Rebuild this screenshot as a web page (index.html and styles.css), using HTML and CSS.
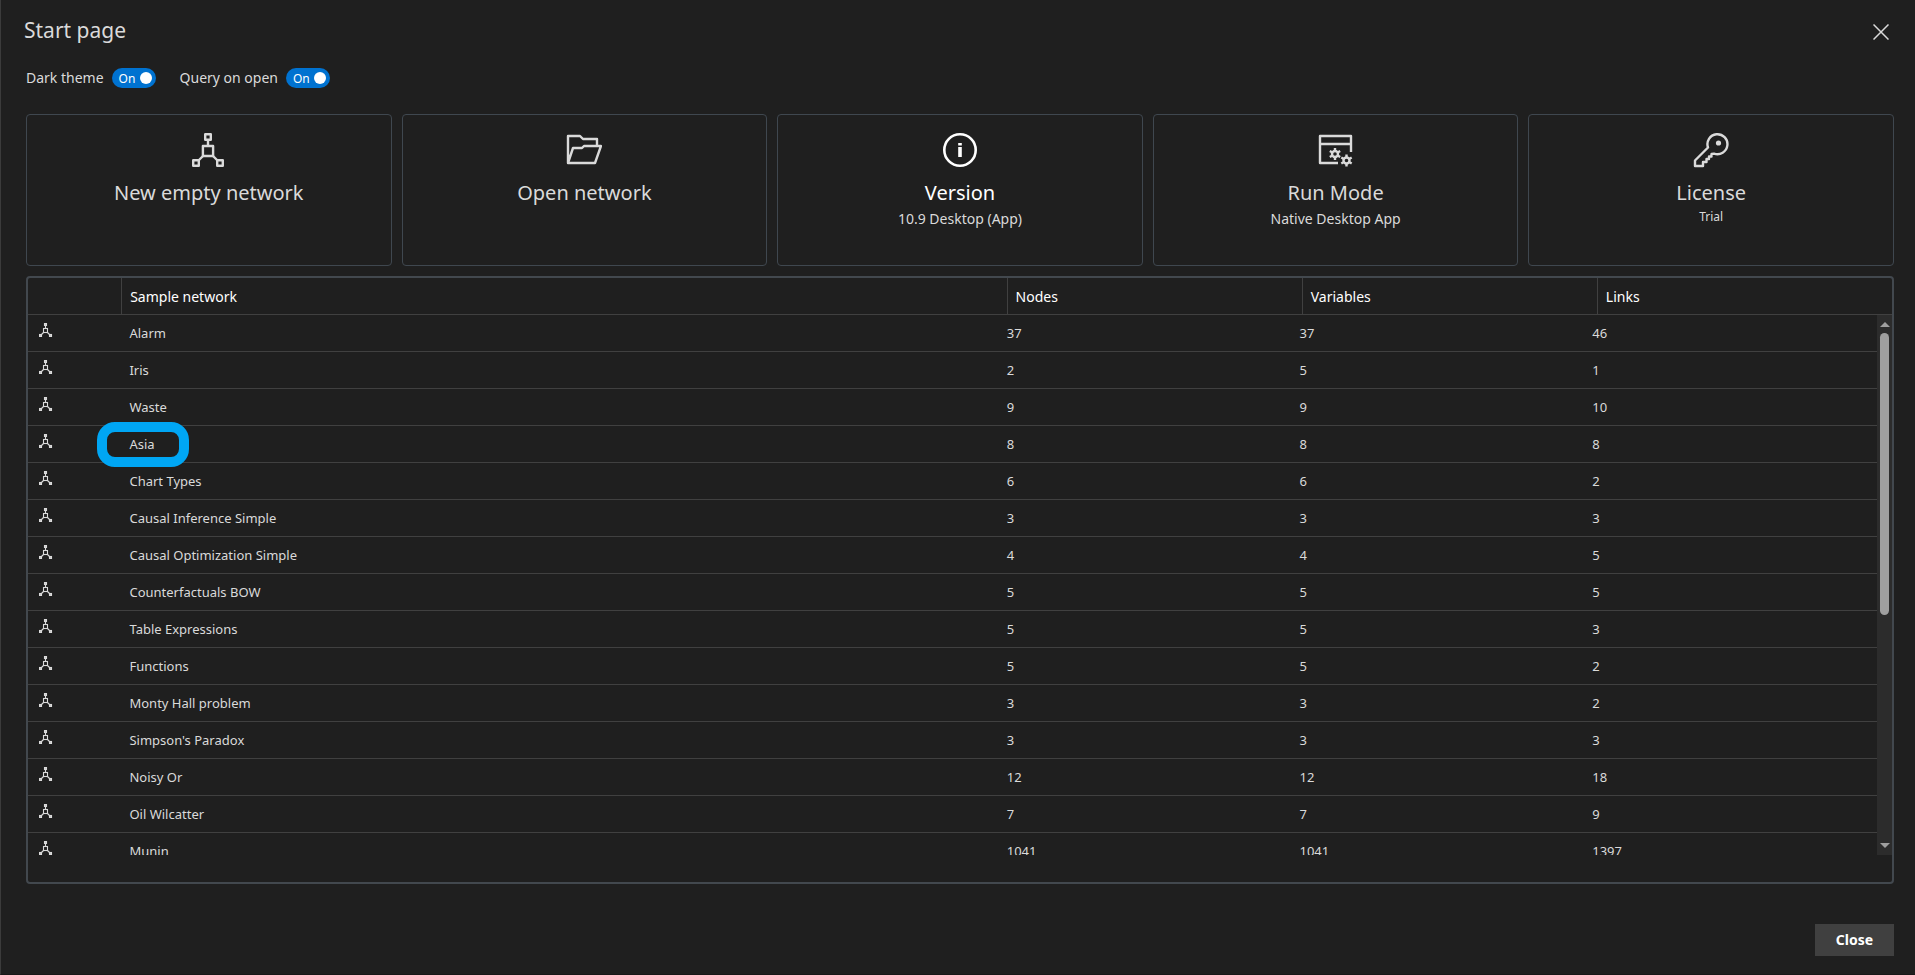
FILE: index.html
```html
<!DOCTYPE html>
<html lang="en">
<head>
<meta charset="utf-8">
<title>Start page</title>
<link rel="stylesheet" href="styles.css">
</head>
<body>
<svg class="sprite" aria-hidden="true">
  <symbol id="net" viewBox="0 0 32 34"><g fill="none" stroke="currentColor" stroke-width="2.400" stroke-linejoin="round"><rect x="13.200" y="1.200" width="5.600" height="5.600"/><rect x="10.900" y="13" width="10.200" height="10"/><rect x="1.200" y="27.200" width="5.600" height="5.600"/><rect x="25.200" y="27.200" width="5.600" height="5.600"/><path d="M16 7v6M11 23l-5 5M21 23l5 5"/></g></symbol>
  <symbol id="net-small" viewBox="0 0 14 14"><g fill="none" stroke="currentColor" stroke-width="1.100"><rect x="5.500" y=".5" width="2" height="2"/><rect x="4.500" y="5.500" width="4" height="4"/><rect x=".5" y="11.500" width="2" height="2"/><rect x="10.500" y="11.500" width="2" height="2"/><path d="M6.500 3v2.500M4.500 9.500l-2 2M8.500 9.500l2 2"/></g></symbol>
</svg>
<main class="dialog">
  <header class="titlebar">
    <h1>Start page</h1>
    <button class="dismiss" aria-label="Dismiss"><svg width="16" height="16" viewBox="0 0 16 16"><path d="m.5.5 15 15M15.500.5l-15 15" fill="none" stroke="currentColor" stroke-width="1.500"/></svg></button>
  </header>
  <div class="options">
    <label class="option">Dark theme <span class="switch"><input type="checkbox" role="switch" checked><span class="state">On</span><span class="knob"></span></span></label>
    <label class="option">Query on open <span class="switch"><input type="checkbox" role="switch" checked><span class="state">On</span><span class="knob"></span></span></label>
  </div>
  <section class="cards">
    <button class="card"><svg class="icon" viewBox="0 0 36 36"><use href="#net" x="1" y="1" width="32" height="34"/></svg><span class="name">New empty network</span></button>
    <button class="card"><svg class="icon" viewBox="0 0 36 36"><path d="M2 31V4h12l3 3h14v7M2 31l5-15h9l2-2h17l-6 17z" fill="none" stroke="currentColor" stroke-width="2.400" stroke-linejoin="round"/></svg><span class="name">Open network</span></button>
    <button class="card active"><svg class="icon" viewBox="0 0 36 36"><circle cx="18" cy="18" r="15.700" fill="none" stroke="currentColor" stroke-width="2.600"/><path d="M16.200 11h3.600v2.500h-3.600zM16.200 15h3.600v10h-3.600z" fill="currentColor"/></svg><span class="name">Version</span><span class="detail">10.9 Desktop (App)</span></button>
    <button class="card"><svg class="icon" viewBox="0 0 36 36"><g fill="none" stroke="currentColor" stroke-width="2.400"><path d="M20 31H2V4h31v16M2 12h31" stroke-linejoin="round"/><circle cx="17" cy="22" r="3"/><path d="M17 16v3M17 25v3M11.800 19l2.600 1.500M19.600 23.500l2.600 1.500M11.800 25l2.600-1.500M19.600 20.500l2.600-1.500"/><circle cx="28.500" cy="28.500" r="3"/><path d="M28.500 22.500v3M28.500 31.500v3M23.300 25.500l2.600 1.500M31.100 30l2.600 1.500M23.300 31.500l2.600-1.500M31.100 27l2.600-1.500"/></g></svg><span class="name">Run Mode</span><span class="detail">Native Desktop App</span></button>
    <button class="card"><svg class="icon" viewBox="0 0 36 36"><path d="M15 15.500A10 10 0 1 1 21 21.600L18.500 22v2.500H16V27h-2.500v3H10v4H2v-5.500z" fill="none" stroke="currentColor" stroke-width="2.400" stroke-linejoin="round"/><circle cx="25.500" cy="11" r="2.600" fill="currentColor"/></svg><span class="name">License</span><span class="detail small">Trial</span></button>
  </section>
  <section class="samples">
    <table class="grid head">
      <colgroup><col class="c-icon"><col class="c-name"><col class="c-num"><col class="c-num"><col class="c-num"></colgroup>
      <thead><tr><th aria-label="Type"></th><th>Sample network</th><th>Nodes</th><th>Variables</th><th>Links</th></tr></thead>
    </table>
    <div class="viewport">
      <div class="rows">
        <table class="grid body" aria-label="Sample networks">
          <colgroup><col class="c-icon"><col class="c-name"><col class="c-num"><col class="c-num"><col class="c-num"></colgroup>
          <tbody>
            <tr><td><svg class="mini"><use href="#net-small"/></svg></td><td>Alarm</td><td>37</td><td>37</td><td>46</td></tr>
            <tr><td><svg class="mini"><use href="#net-small"/></svg></td><td>Iris</td><td>2</td><td>5</td><td>1</td></tr>
            <tr><td><svg class="mini"><use href="#net-small"/></svg></td><td>Waste</td><td>9</td><td>9</td><td>10</td></tr>
            <tr><td><svg class="mini"><use href="#net-small"/></svg></td><td><span class="marked">Asia</span></td><td>8</td><td>8</td><td>8</td></tr>
            <tr><td><svg class="mini"><use href="#net-small"/></svg></td><td>Chart Types</td><td>6</td><td>6</td><td>2</td></tr>
            <tr><td><svg class="mini"><use href="#net-small"/></svg></td><td>Causal Inference Simple</td><td>3</td><td>3</td><td>3</td></tr>
            <tr><td><svg class="mini"><use href="#net-small"/></svg></td><td>Causal Optimization Simple</td><td>4</td><td>4</td><td>5</td></tr>
            <tr><td><svg class="mini"><use href="#net-small"/></svg></td><td>Counterfactuals BOW</td><td>5</td><td>5</td><td>5</td></tr>
            <tr><td><svg class="mini"><use href="#net-small"/></svg></td><td>Table Expressions</td><td>5</td><td>5</td><td>3</td></tr>
            <tr><td><svg class="mini"><use href="#net-small"/></svg></td><td>Functions</td><td>5</td><td>5</td><td>2</td></tr>
            <tr><td><svg class="mini"><use href="#net-small"/></svg></td><td>Monty Hall problem</td><td>3</td><td>3</td><td>2</td></tr>
            <tr><td><svg class="mini"><use href="#net-small"/></svg></td><td>Simpson's Paradox</td><td>3</td><td>3</td><td>3</td></tr>
            <tr><td><svg class="mini"><use href="#net-small"/></svg></td><td>Noisy Or</td><td>12</td><td>12</td><td>18</td></tr>
            <tr><td><svg class="mini"><use href="#net-small"/></svg></td><td>Oil Wilcatter</td><td>7</td><td>7</td><td>9</td></tr>
            <tr><td><svg class="mini"><use href="#net-small"/></svg></td><td>Munin</td><td>1041</td><td>1041</td><td>1397</td></tr>
          </tbody>
        </table>
      </div>
      <div class="scrollbar" aria-hidden="true"><span class="arrow up"></span><span class="track"><span class="thumb"></span></span><span class="arrow down"></span></div>
    </div>
  </section>
  <footer class="actions"><button class="close">Close</button></footer>
</main>
</body>
</html>
```
FILE: styles.css
```css
* { box-sizing: border-box; }
body {
  margin: 0;
  background: #1f1f1f;
  color: #dadada;
  font: 14px/20px "Noto Sans", sans-serif;
}
button { font: inherit; color: inherit; background: none; border: 0; padding: 0; }
.sprite { position: absolute; width: 0; height: 0; }
.dialog {
  display: flex;
  flex-direction: column;
  height: 100vh;
  padding: 16px 21px 18px 25px;
  border-left: 1px solid #3b3b3b;
  border-bottom: 1px solid #181818;
}
.titlebar { display: flex; justify-content: space-between; align-items: flex-start; height: 30px; margin-left: -2px; }
h1 { margin: 0; font-size: 21px; line-height: 28px; font-weight: 400; }
.dismiss { display: flex; padding: 8px 5px 4px; }
.options { display: flex; gap: 24px; margin-top: 20px; height: 24px; align-items: center; }
.option { display: flex; align-items: center; gap: 8px; }
.switch {
  position: relative;
  display: flex;
  align-items: center;
  justify-content: space-between;
  width: 44px;
  height: 20px;
  padding: 0 4px 0 7px;
  border-radius: 10px;
  background: #0072d0;
  color: #fff;
  font-size: 12px;
}
.switch input { position: absolute; inset: 0; width: 100%; height: 100%; margin: 0; opacity: 0; }
.state { padding-top: 1px; }
.knob { width: 12px; height: 12px; border-radius: 50%; background: #fff; }
.cards { display: grid; grid-template-columns: repeat(5, 1fr); gap: 10px; margin-top: 24px; }
.card {
  display: flex;
  flex-direction: column;
  align-items: center;
  height: 152px;
  padding-top: 17px;
  border: 1px solid #3f474f;
  border-radius: 4px;
}
.icon { width: 36px; height: 36px; }
.name { margin-top: 11px; font-size: 20px; line-height: 28px; }
.active .icon, .active .name { color: #fff; }
.detail { margin-top: 2px; }
.detail.small { font-size: 12px; line-height: 16px; }
.samples {
  display: flex;
  flex-direction: column;
  flex: 1;
  min-height: 0;
  margin-top: 10px;
  padding-bottom: 27px;
  border: 2px solid #42484e;
  border-radius: 4px;
}
.grid { width: 100%; table-layout: fixed; border-collapse: separate; border-spacing: 0; }
.c-icon { width: 5%; }
.c-name { width: 47.5%; }
th, td { height: 37px; padding: 0 8px; border-bottom: 1px solid #404040; text-align: left; }
th { padding-top: 1px; color: #fff; font-weight: 400; }
th + th { border-left: 1px solid #404040; }
td { font-size: 13px; }
td:nth-child(-n+2) { padding-left: 9px; }
.mini { display: block; width: 14px; height: 14px; margin: 0 0 7px 2px; }
.viewport { display: flex; flex: 1; min-height: 0; }
.rows { flex: 1; overflow-y: auto; scrollbar-width: none; }
.marked { position: relative; }
.marked::after {
  content: "";
  position: absolute;
  inset: -13px -34px -14px -32px;
  border: 10px solid #00a6f4;
  border-radius: 18px;
}
.scrollbar { display: flex; flex-direction: column; align-items: center; width: 15px; background: #2c2c2c; }
.arrow { height: 12px; border: 0 solid transparent; border-width: 6px 5px; }
.up { border-bottom: 5px solid #9f9f9f; border-top-width: 6px; margin-bottom: 6px; }
.down { border-top: 5px solid #9f9f9f; border-bottom-width: 7px; margin-top: 6px; }
.track { flex: 1; width: 9px; }
.thumb { display: block; height: 56%; border-radius: 5px; background: #9f9f9f; }
.actions { display: flex; justify-content: flex-end; margin-top: 40px; }
.close { width: 79px; height: 32px; background: #404040; color: #fff; font-weight: 700; }
```
